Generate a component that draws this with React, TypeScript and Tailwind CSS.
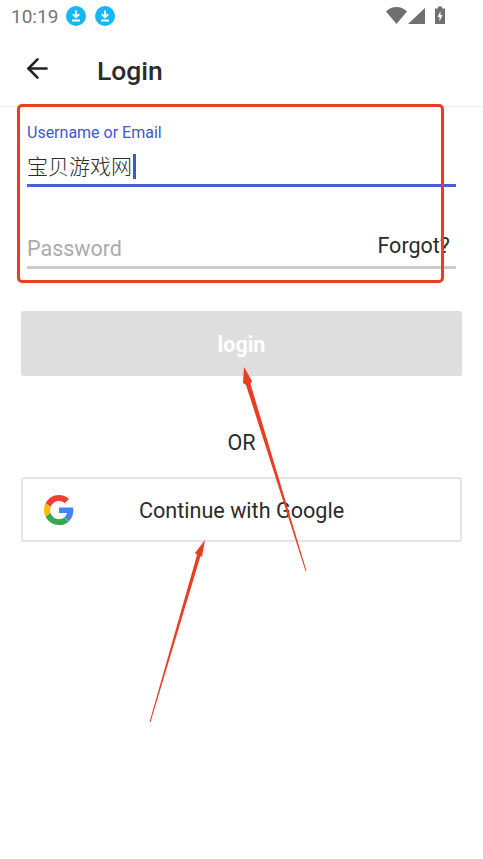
import { ArrowLeft } from "lucide-react";

function DownloadBadge() {
  return (
    <svg width="20" height="20" viewBox="0 0 20 20" aria-hidden="true">
      <circle cx="10" cy="10" r="10" fill="#12b7f5" />
      <path d="M10 4.500v6.500M6.800 8.200 10 11.200l3.200-3M6 14.500h8" stroke="#fff" strokeWidth="1.900" fill="none" />
    </svg>
  );
}

function GoogleLogo() {
  return (
    <svg width="30" height="30" viewBox="0 0 48 48" aria-hidden="true">
      <path fill="#EA4335" d="M24 9.500c3.500 0 6.700 1.300 9.100 3.500l6.800-6.800C35.800 2.500 30.300 0 24 0 14.600 0 6.500 5.400 2.600 13.200l7.900 6.100C12.400 13.700 17.700 9.500 24 9.500z" />
      <path fill="#4285F4" d="M47 24.500c0-1.600-.2-3.200-.4-4.700H24v9h12.900c-.6 3-2.200 5.500-4.700 7.200l7.600 5.900C44.300 37.800 47 31.700 47 24.500z" />
      <path fill="#FBBC05" d="M10.500 28.700c-.5-1.400-.8-3-.8-4.700s.3-3.200.8-4.700l-7.900-6.100C.9 16.500 0 20.100 0 24s.9 7.500 2.600 10.800l7.900-6.100z" />
      <path fill="#34A853" d="M24 48c6.500 0 11.900-2.100 15.800-5.800l-7.600-5.900c-2.100 1.400-4.900 2.300-8.200 2.300-6.300 0-11.600-4.200-13.500-9.900l-7.900 6.100C6.500 42.600 14.600 48 24 48z" />
    </svg>
  );
}

function StatusBar() {
  return (
    <div className="flex h-[32px] items-center justify-between pl-[11px] pr-[35px] text-[#757575]">
      <div className="flex items-center">
        <span className="text-[19px] leading-none">10:19</span>
        <span className="ml-[8px] flex gap-[9px]">
          <DownloadBadge />
          <DownloadBadge />
        </span>
      </div>
      <svg width="62" height="20" viewBox="0 0 62 20" fill="#707070" aria-hidden="true">
        <path d="M0 5.500C2.500 2.800 6 1 10.500 1S18.500 2.800 21 5.500L10.500 18z" />
        <path d="M39 2v16H22z" />
        <path d="M49 2.500h3V.5h4v2h3v15.500H49z" />
        <path d="M54.500 5 51.500 11h2v4.500l3-6.500h-2z" fill="#fff" />
      </svg>
    </div>
  );
}

export default function App() {
  return (
    <div className="relative h-[859px] w-[483px] overflow-hidden bg-white font-['Roboto','Noto_Sans_CJK_SC',sans-serif] text-[#2b2b2b]">
      <StatusBar />

      <header className="flex h-[75px] items-center border-b border-[#ececec] pl-[22px]">
        <ArrowLeft size={31} strokeWidth={2} className="mb-[1px] text-[#222]" />
        <h1 className="ml-[44px] mt-[4px] text-[26.500px] font-medium">Login</h1>
      </header>

      <div className="px-[27px]">
        <div className="mt-[16px]">
          <label className="block text-[16px] leading-[20px] text-[#3f57d0]">Username or Email</label>
          <div className="flex h-[44px] items-center border-b-[3px] border-[#4560d4] pt-[5px] text-[21px]">
            <span className="w-[106px] font-['Noto_Sans_CJK_SC',sans-serif] font-light">宝贝游戏网</span>
            <span className="h-[25px] w-[3px] bg-[#3f57d0]" />
          </div>
        </div>

        <div className="mt-[42px] flex h-[40px] items-center justify-between border-b-[3px] border-[#cbcbcb] pr-[6px]">
          <span className="pt-[4px] text-[21.500px] text-[#ababab]">Password</span>
          <button className="pb-[3px] text-[21.500px]">Forgot?</button>
        </div>
      </div>

      <div className="px-[21px]">
        <button className="mt-[42px] block h-[65px] w-[441px] rounded-[3px] bg-[#dedede] pt-[3px] text-[21.500px] font-bold text-white">
          login
        </button>
        <p className="mt-[55px] text-center text-[21.500px] leading-[24px]">OR</p>
        <button className="relative mt-[22px] flex h-[65px] w-[441px] items-center justify-center rounded-[3px] border-2 border-[#e4e4e4] pt-[3px] text-[21.600px] font-[450]">
          <span className="absolute left-[21px] top-[16px]">
            <GoogleLogo />
          </span>
          Continue with Google
        </button>
      </div>

      {/* red markup drawn over the screenshot */}
      <div className="absolute left-[17px] top-[104px] h-[179px] w-[427px] rounded-[5px] border-[3px] border-[#ea3e23]" />
      <svg className="absolute left-0 top-0" width="483" height="859" viewBox="0 0 483 859" aria-hidden="true">
        <path d="M306.500 571 L250.500 384 L252 381 L244 367 L243 383 L246 385 L305.500 571 Z" fill="#ea3e23" />
        <path d="M150.500 722 L200.500 556 L202 557 L205 540 L195 553 L197 555 L149.500 722 Z" fill="#ea3e23" />
      </svg>
    </div>
  );
}
